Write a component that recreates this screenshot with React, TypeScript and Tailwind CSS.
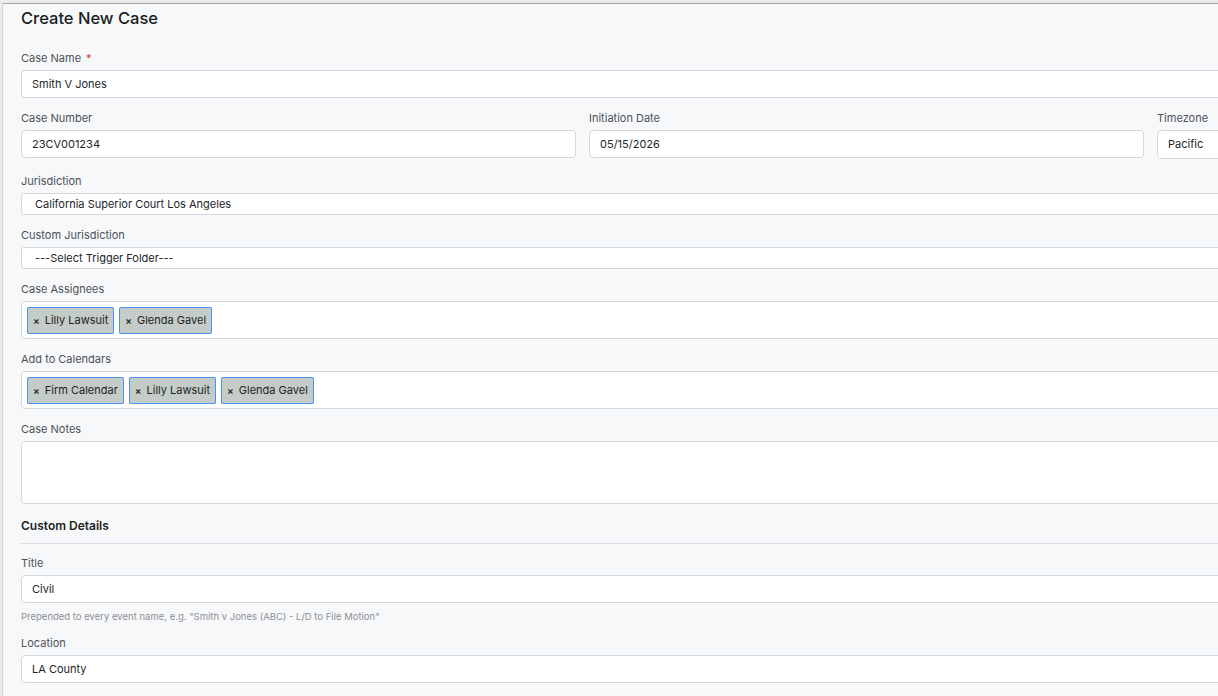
import React from "react";

/**
 * Create New Case form. The form is wider than the window, so the right edge of every
 * control is cut off, just as in the screen it copies.
 */

const font = { fontFamily: "Inter, 'Noto Sans', sans-serif" };

function Label({ children, required }: { children: React.ReactNode; required?: boolean }) {
  return (
    <div className="mb-[5px] h-[14px] text-[11px] leading-[14px] text-[#4b5259]">
      {children}
      {required ? <span className="ml-[5px] text-[#dc3545]">*</span> : null}
    </div>
  );
}

function TextInput({ value, className = "" }: { value: string; className?: string }) {
  return (
    <div
      className={`flex h-[28px] items-center rounded-[4px] border border-[#d3d8de] bg-white pl-[10px] text-[11px] text-[#212529] ${className}`}
    >
      {value}
    </div>
  );
}

function SelectBox({ value }: { value: string }) {
  return (
    <div className="flex h-[22px] items-center rounded-[3px] border border-[#d3d8de] bg-white pl-[13px] text-[11px] text-[#212529]">
      {value}
    </div>
  );
}

function Tag({ name }: { name: string }) {
  return (
    <span className="flex h-[27px] items-center rounded-[2px] bg-[#c3ccc6] px-[6px] text-[11px] text-[#1f2326] ring-1 ring-inset ring-[#4b93f2]">
      <span className="mr-[5px] text-[10px] font-semibold">×</span>
      {name}
    </span>
  );
}

function TagBox({ tags }: { tags: string[] }) {
  return (
    <div className="flex h-[38px] items-center gap-[5px] rounded-[4px] border border-[#d3d8de] bg-white pl-[5px]">
      {tags.map((t) => (
        <Tag key={t} name={t} />
      ))}
    </div>
  );
}

export default function App() {
  return (
    <div className="h-[696px] w-[1218px] overflow-hidden bg-[#ebebeb] pt-[3px]" style={font}>
      <div className="ml-[2px] h-full border-l border-t border-[#a3a3a3] border-l-[#d6d6d6] bg-[#f7f8fa]">
        <div className="w-[1351px] pl-[18px]">
          <h1 className="mt-[2px] h-[24px] text-[16.5px] font-medium leading-[24px] text-[#1b1e21]">
            Create New Case
          </h1>

          <div className="mt-[21px] mb-[13px]">
            <Label required>Case Name</Label>
            <TextInput value="Smith V Jones" />
          </div>

          <div className="mb-[15px] grid grid-cols-[555px_555px_215px] gap-x-[13px]">
            <div>
              <Label>Case Number</Label>
              <TextInput value="23CV001234" className="h-[27px]" />
            </div>
            <div>
              <Label>Initiation Date</Label>
              <TextInput value="05/15/2026" className="h-[27px]" />
            </div>
            <div>
              <Label>Timezone</Label>
              <TextInput value="Pacific" className="h-[29px]" />
            </div>
          </div>

          <div className="mb-[13px]">
            <Label>Jurisdiction</Label>
            <SelectBox value="California Superior Court Los Angeles" />
          </div>

          <div className="mb-[13px]">
            <Label>Custom Jurisdiction</Label>
            <SelectBox value="---Select Trigger Folder---" />
          </div>

          <div className="mb-[13px]">
            <Label>Case Assignees</Label>
            <TagBox tags={["Lilly Lawsuit", "Glenda Gavel"]} />
          </div>

          <div className="mb-[13px]">
            <Label>Add to Calendars</Label>
            <TagBox tags={["Firm Calendar", "Lilly Lawsuit", "Glenda Gavel"]} />
          </div>

          <div>
            <Label>Case Notes</Label>
            <div className="h-[63px] rounded-[4px] border border-[#d3d8de] bg-white" />
          </div>

          <div className="mt-[14px] border-b border-[#d9dde2] pb-[9px]">
            <h2 className="h-[16px] text-[12px] font-semibold leading-[16px] text-[#1b1e21]">
              Custom Details
            </h2>
          </div>

          <div className="mt-[12px]">
            <Label>Title</Label>
            <TextInput value="Civil" className="h-[27px]" />
            <p className="mt-[7px] h-[13px] text-[9.5px] leading-[13px] text-[#8c9196]">
              Prepended to every event name, e.g. "Smith v Jones (ABC) - L/D to File Motion"
            </p>
          </div>

          <div className="mt-[13px]">
            <Label>Location</Label>
            <TextInput value="LA County" className="h-[27px]" />
          </div>
        </div>
      </div>
    </div>
  );
}
